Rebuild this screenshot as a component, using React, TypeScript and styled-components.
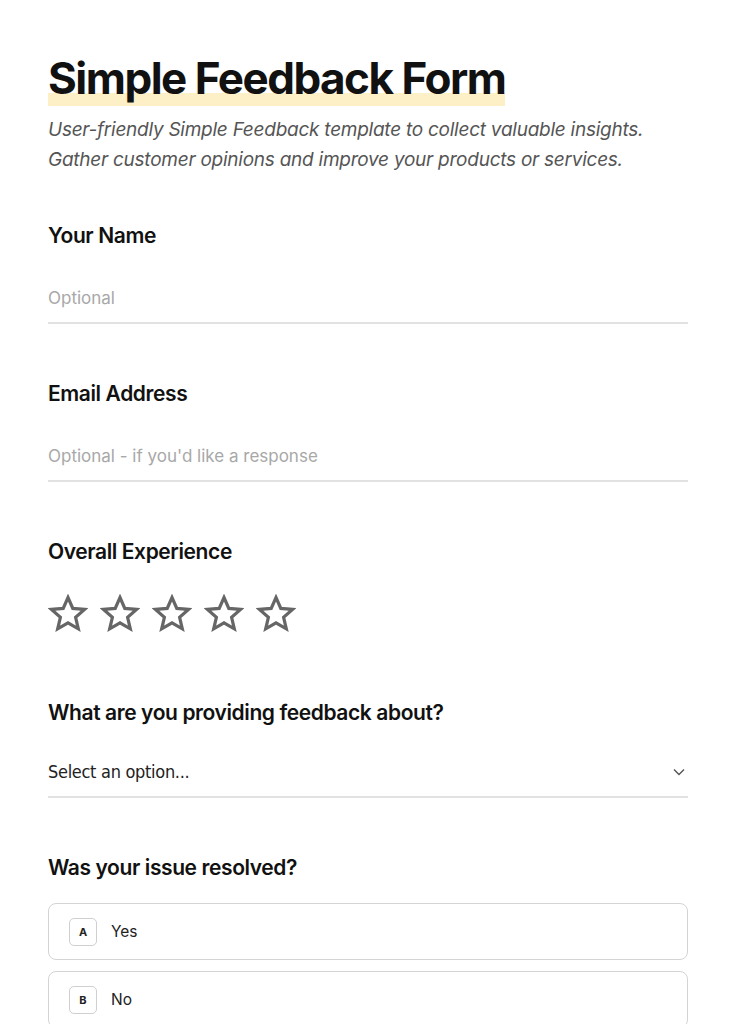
import React from 'react'
import styled, { createGlobalStyle } from 'styled-components'

const GlobalStyle = createGlobalStyle`
  body {
    margin: 0;
    background: #ffffff;
    font-family: Inter, 'Noto Sans', sans-serif;
    color: #111111;
  }
`

const Page = styled.div`
  padding: 51px 48px 0 48px;
  display: flex;
  flex-direction: column;
`

const Title = styled.h1`
  margin: 0;
  align-self: flex-start;
  font-size: 44px;
  font-weight: 700;
  letter-spacing: -1.5px;
  line-height: 55px;
  background: linear-gradient(transparent 76%, #fdefc6 76%, #fdefc6 100%);
`

const Subtitle = styled.p`
  margin: 9px 0 0 0;
  font-size: 19px;
  font-style: italic;
  line-height: 30px;
  color: #555555;
  letter-spacing: -0.25px;
`

const Field = styled.div<{ $top: number }>`
  margin-top: ${p => p.$top}px;
  display: flex;
  flex-direction: column;
`

const Label = styled.label`
  font-size: 21px;
  font-weight: 600;
  letter-spacing: -0.4px;
  line-height: 28px;
  color: #111111;
`

const TextInput = styled.input`
  margin-top: 36px;
  border: none;
  border-bottom: 2px solid #e2e2e2;
  padding: 0 0 12px 0;
  font-family: inherit;
  font-size: 17px;
  line-height: 24px;
  outline: none;
  background: transparent;
  &::placeholder {
    color: #a8a8a8;
  }
`

const Stars = styled.div`
  margin-top: 28px;
  display: flex;
  gap: 12px;
`

const StarButton = styled.button`
  width: 40px;
  height: 40px;
  padding: 0;
  border: none;
  background: none;
  cursor: pointer;
`

const SelectRow = styled.div`
  margin-top: 33px;
  display: flex;
  align-items: center;
  justify-content: space-between;
  border-bottom: 2px solid #e2e2e2;
  padding: 0 2px 12px 0;
`

const SelectText = styled.span`
  font-family: 'DejaVu Sans Condensed', 'Liberation Sans Narrow', sans-serif;
  font-size: 18px;
  line-height: 24px;
  letter-spacing: -0.3px;
  color: #222222;
`

const Options = styled.div`
  margin-top: 21px;
  display: flex;
  flex-direction: column;
  gap: 11px;
`

const Option = styled.div`
  height: 57px;
  box-sizing: border-box;
  border: 1px solid #d4d4d4;
  border-radius: 8px;
  display: flex;
  align-items: center;
  padding: 0 20px;
  gap: 14px;
`

const Key = styled.span`
  width: 28px;
  height: 28px;
  box-sizing: border-box;
  border: 1px solid #cfcfcf;
  border-radius: 5px;
  display: flex;
  align-items: center;
  justify-content: center;
  font-size: 11px;
  font-weight: 700;
  color: #222222;
`

const OptionText = styled.span`
  font-size: 15.5px;
  color: #222222;
`

const Star = () => (
  <svg width="40" height="40" viewBox="0 0 40 40">
    <polygon
      points="20,3.5 24.8,14.4 36.5,15.4 27.6,23.3 30.3,34.8 20,28.8 9.7,34.8 12.4,23.3 3.5,15.4 15.2,14.4"
      fill="none"
      stroke="#666666"
      strokeWidth="3.2"
      strokeLinejoin="miter"
    />
  </svg>
)

const Chevron = () => (
  <svg width="14" height="14" viewBox="0 0 14 14">
    <path d="M2 4.5 L7 9.5 L12 4.5" fill="none" stroke="#555" strokeWidth="1.4" />
  </svg>
)

const App = () => {
  return (
    <>
      <GlobalStyle />
      <Page>
        <Title>Simple Feedback Form</Title>
        <Subtitle>
          User-friendly Simple Feedback template to collect valuable insights.
          <br />
          Gather customer opinions and improve your products or services.
        </Subtitle>

        <Field $top={47}>
          <Label>Your Name</Label>
          <TextInput placeholder="Optional" />
        </Field>

        <Field $top={56}>
          <Label>Email Address</Label>
          <TextInput placeholder="Optional - if you'd like a response" />
        </Field>

        <Field $top={56}>
          <Label>Overall Experience</Label>
          <Stars>
            {[1, 2, 3, 4, 5].map(n => (
              <StarButton key={n} aria-label={`${n} star`}>
                <Star />
              </StarButton>
            ))}
          </Stars>
        </Field>

        <Field $top={65}>
          <Label>What are you providing feedback about?</Label>
          <SelectRow>
            <SelectText>Select an option...</SelectText>
            <Chevron />
          </SelectRow>
        </Field>

        <Field $top={56}>
          <Label>Was your issue resolved?</Label>
          <Options>
            <Option>
              <Key>A</Key>
              <OptionText>Yes</OptionText>
            </Option>
            <Option>
              <Key>B</Key>
              <OptionText>No</OptionText>
            </Option>
          </Options>
        </Field>
      </Page>
    </>
  )
}

export default App
